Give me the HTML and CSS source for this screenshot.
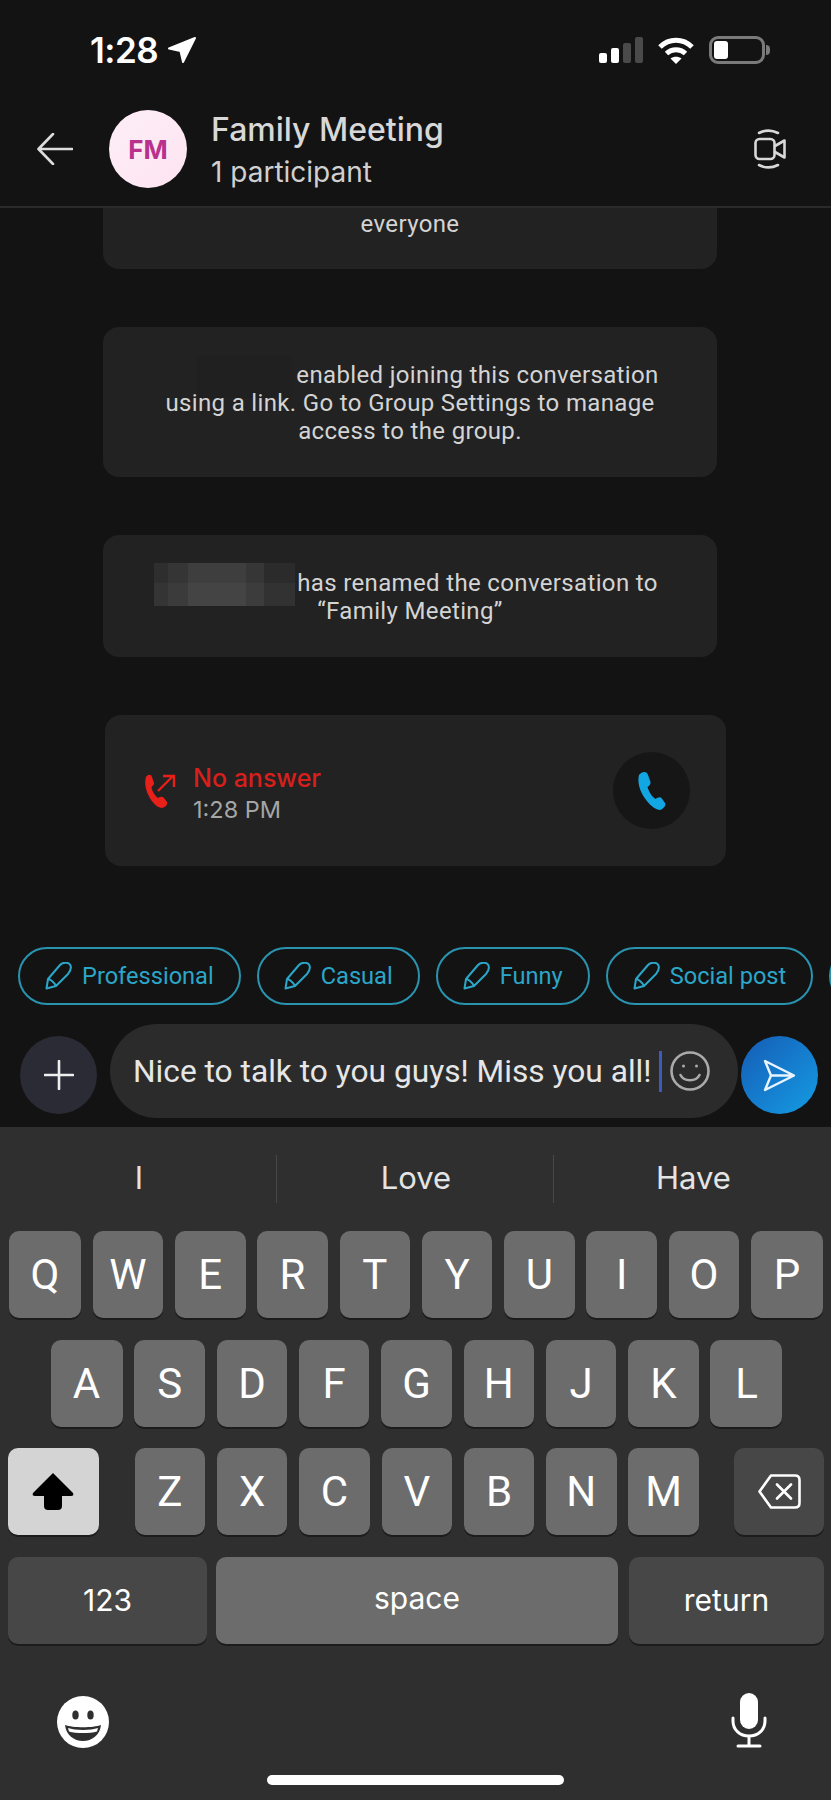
FILE: index.html
```html
<!DOCTYPE html>
<html lang="en">
<head>
    <meta charset="UTF-8">
    <meta name="viewport" content="width=device-width, initial-scale=1.0">
    <title>Family Meeting</title>
    <link rel="stylesheet" href="styles.css">
</head>
<body>
    <!-- Status bar -->
    <div class="status-bar">
        <div class="status-time">
            <span>1:28</span>
            <svg class="location-icon" width="28" height="26" viewBox="0 0 28 26"><path d="M27 1 L15 25 L12.500 14 L1 11.500 Z" fill="#fff" stroke="#fff" stroke-width="2" stroke-linejoin="round"/></svg>
        </div>
        <div class="status-icons">
            <div class="signal">
                <i class="bar-1"></i><i class="bar-2"></i><i class="bar-3"></i><i class="bar-4"></i>
            </div>
            <svg width="36" height="27" viewBox="0 0 36 27" fill="none" stroke="#fff" stroke-width="5">
                <path d="M2 10 C11 1 25 1 34 10"/>
                <path d="M8.5 16.5 C14 11.5 22 11.5 27.5 16.5"/>
                <path d="M18 27 L12.5 21.5 C15.5 19 20.5 19 23.500 21.500 Z" fill="#fff" stroke="none"/>
            </svg>
            <div class="battery"><div class="battery-fill"></div></div>
        </div>
    </div>

    <!-- Header -->
    <div class="chat-header">
        <svg class="back-icon" width="36" height="32" viewBox="0 0 36 32" fill="none" stroke="#ddd" stroke-width="2.600" stroke-linecap="round" stroke-linejoin="round"><path d="M35 16 H2 M16 1 L1.500 16 L16 31"/></svg>
        <div class="avatar">FM</div>
        <div class="chat-title">
            <div class="chat-name">Family Meeting</div>
            <div class="chat-sub">1 participant</div>
        </div>
        <svg class="video-icon" width="32" height="40" viewBox="0 0 32 40" fill="none" stroke="#d8d8d8" stroke-width="2.600" stroke-linecap="round" stroke-linejoin="round">
            <rect x="1.500" y="10" width="19" height="20" rx="4"/>
            <path d="M21 17 L30.500 11.500 V28.500 L21 23"/>
            <path d="M5 4 C11 1 18 1 24 4 M5 36 C11 39 18 39 24 36"/>
        </svg>
    </div>

    <!-- Messages -->
    <div class="messages">
        <div class="notice notice-cut">everyone</div>
        <div class="notice notice-link">
            <span class="first-line"><span class="name-faint"></span>enabled joining this conversation</span><br>
            using a link. Go to Group Settings to manage<br>
            access to the group.
        </div>
        <div class="notice notice-rename">
            <span class="first-line"><span class="name-blur"></span>has renamed the conversation to</span><br>
            “Family Meeting”
        </div>
        <div class="call-card">
            <svg class="call-missed" width="33" height="34" viewBox="0 0 33 34">
                <path d="M3 3 C5 0 8 0 9 3 L11 9 C11.500 11 9 12 8.500 13.500 C9 17 12 22 15 24 C17 23 19 22 21 24 L24 28 C25 31 22 33 19 34 C11 34 -1 16 3 3Z" fill="#e8201a"/>
                <path d="M15 17 L30 2 M20 2 H31 V13" fill="none" stroke="#e8201a" stroke-width="2.400"/>
            </svg>
            <div class="call-info">
                <div class="call-status">No answer</div>
                <div class="call-time">1:28 PM</div>
            </div>
            <div class="call-back">
                <svg width="29" height="39" viewBox="0 0 29 39"><path d="M2 4 C5 0 10 0 11 4 L13.500 11 C14 13 12 15 10.500 16 C11.500 20 15 26 18.500 28 C20.500 27 22.500 25.500 24.500 27 L28 32 C29.500 35 26 38 23 39 C15 39 -2 20 2 4Z" fill="#12a6e2"/></svg>
            </div>
        </div>
    </div>

    <!-- Tone chips -->
    <div class="chips">
        <div class="chip">
            <svg class="pen" width="27" height="28" viewBox="0 0 27 28"><path d="M1.500 26.500 L3 17 L15 3 C18 0 23 0 25 2.500 C26.500 5 25.500 9 23 12 L11 24 Z M3 17 C5 17 9 20 11 24" /></svg>
            Professional
        </div>
        <div class="chip">
            <svg class="pen" width="27" height="28" viewBox="0 0 27 28"><path d="M1.500 26.500 L3 17 L15 3 C18 0 23 0 25 2.500 C26.500 5 25.500 9 23 12 L11 24 Z M3 17 C5 17 9 20 11 24" /></svg>
            Casual
        </div>
        <div class="chip">
            <svg class="pen" width="27" height="28" viewBox="0 0 27 28"><path d="M1.500 26.500 L3 17 L15 3 C18 0 23 0 25 2.500 C26.500 5 25.500 9 23 12 L11 24 Z M3 17 C5 17 9 20 11 24" /></svg>
            Funny
        </div>
        <div class="chip">
            <svg class="pen" width="27" height="28" viewBox="0 0 27 28"><path d="M1.500 26.500 L3 17 L15 3 C18 0 23 0 25 2.500 C26.500 5 25.500 9 23 12 L11 24 Z M3 17 C5 17 9 20 11 24" /></svg>
            Social post
        </div>
        <div class="chip chip-next"></div>
    </div>

    <!-- Composer -->
    <div class="composer">
        <div class="plus-btn">
            <svg width="30" height="30" viewBox="0 0 30 30" stroke="#eee" stroke-width="2.600" stroke-linecap="round"><path d="M15 1 V29 M1 15 H29"/></svg>
        </div>
        <div class="input-box">
            <span class="input-text">Nice to talk to you guys! Miss you all!</span>
            <span class="caret"></span>
            <svg width="40" height="40" viewBox="0 0 40 40" fill="none" stroke="#aaa" stroke-width="2.600" stroke-linecap="round">
                <circle cx="20" cy="20" r="18.500"/>
                <circle cx="13.500" cy="15" r="1.500" fill="#aaa" stroke="none"/>
                <circle cx="26.500" cy="15" r="1.500" fill="#aaa" stroke="none"/>
                <path d="M10.500 24 C14 31 26 31 29.500 24"/>
            </svg>
        </div>
        <div class="send-btn">
            <svg width="33" height="33" viewBox="0 0 33 33" fill="none" stroke="#e8f4ff" stroke-width="2.400" stroke-linejoin="round"><path d="M2 2 L31 16.500 L2 31 L8 16.500 Z M8 16.500 H31"/></svg>
        </div>
    </div>

    <!-- Keyboard -->
    <div class="keyboard">
        <div class="suggestions">
            <div class="suggestion">I</div>
            <div class="suggestion">Love</div>
            <div class="suggestion">Have</div>
        </div>
        <div class="key-rows">
            <div class="key-row">
                <div class="key">Q</div><div class="key">W</div><div class="key">E</div><div class="key">R</div><div class="key">T</div><div class="key">Y</div><div class="key">U</div><div class="key">I</div><div class="key">O</div><div class="key">P</div>
            </div>
            <div class="key-row row-home">
                <div class="key">A</div><div class="key">S</div><div class="key">D</div><div class="key">F</div><div class="key">G</div><div class="key">H</div><div class="key">J</div><div class="key">K</div><div class="key">L</div>
            </div>
            <div class="key-row row-split">
                <div class="key key-shift">
                    <svg width="42" height="37" viewBox="0 0 42 37"><path d="M21 0 L41 20 C42 22 41 23 39 23 H30 V33 C30 36 28 37 26 37 H16 C14 37 12 36 12 33 V23 H3 C1 23 0 22 1 20 Z" fill="#000"/></svg>
                </div>
                <div class="letters">
                    <div class="key">Z</div><div class="key">X</div><div class="key">C</div><div class="key">V</div><div class="key">B</div><div class="key">N</div><div class="key">M</div>
                </div>
                <div class="key key-dark key-delete">
                    <svg width="43" height="35" viewBox="0 0 43 35" fill="none" stroke="#fff" stroke-width="2.600" stroke-linecap="round" stroke-linejoin="round"><path d="M13 1.500 H37 C40 1.500 41.500 3 41.500 6 V29 C41.500 32 40 33.500 37 33.500 H13 L1.500 17.500 Z M19 10.500 L33 24.500 M33 10.500 L19 24.500"/></svg>
                </div>
            </div>
            <div class="key-row row-bottom">
                <div class="key key-dark key-123">123</div>
                <div class="key key-space">space</div>
                <div class="key key-dark key-return">return</div>
            </div>
        </div>
        <div class="keyboard-tools">
            <svg width="52" height="52" viewBox="0 0 52 52">
                <circle cx="26" cy="26" r="26" fill="#fff"/>
                <ellipse cx="18.500" cy="19" rx="3.200" ry="4.500" fill="#2f2f2f"/>
                <ellipse cx="33.500" cy="19" rx="3.200" ry="4.500" fill="#2f2f2f"/>
                <path d="M8 29 C16 32 36 32 44 29 C43 39 35 45 26 45 C17 45 9 39 8 29Z" fill="#2f2f2f"/>
                <path d="M11 32 C18 34.500 34 34.500 41 32 L40 35.500 C33 37.500 19 37.500 12 35.500Z" fill="#fff"/>
            </svg>
            <svg width="36" height="55" viewBox="0 0 36 55" fill="none" stroke="#fff" stroke-width="3" stroke-linecap="round">
                <rect x="9" y="0" width="18" height="36" rx="9" fill="#fff" stroke="none"/>
                <path d="M2 25 V28 C2 37 9 43 18 43 C27 43 34 37 34 28 V25 M18 43 V53 M7 53 H29"/>
            </svg>
        </div>
        <div class="home-indicator"></div>
    </div>
</body>
</html>
```

FILE: styles.css
```css
body {
    font-family: 'Inter', 'Liberation Sans', sans-serif;
    margin: 0;
    padding: 0;
    width: 831px;
    height: 1800px;
    overflow: hidden;
    background-color: #131313;
    color: #d8d8d8;
    display: flex;
    flex-direction: column;
}

/* Status bar */
.status-bar {
    height: 100px;
    display: flex;
    align-items: center;
    justify-content: space-between;
    padding: 0 66px 0 90px;
    box-sizing: border-box;
    flex-shrink: 0;
}

.status-time {
    display: flex;
    align-items: center;
    gap: 10px;
    font-size: 35px;
    font-weight: 600;
    color: #fff;
    letter-spacing: -0.5px;
}

.status-icons {
    display: flex;
    align-items: center;
    gap: 15px;
}

.signal {
    display: flex;
    align-items: flex-end;
    gap: 4px;
    height: 26px;
}

.signal i {
    display: block;
    width: 8px;
    border-radius: 2px;
    background-color: #fff;
}

.signal .bar-1 { height: 10px; }
.signal .bar-2 { height: 15px; }
.signal .bar-3 { height: 20px; background-color: #4a4a4a; }
.signal .bar-4 { height: 26px; background-color: #4a4a4a; }

.battery {
    position: relative;
    width: 56px;
    height: 28px;
    border: 3px solid #7a7a7a;
    border-radius: 9px;
    box-sizing: border-box;
    padding: 2px;
}

.battery::after {
    content: "";
    position: absolute;
    right: -8px;
    top: 6px;
    width: 4px;
    height: 10px;
    border-radius: 0 4px 4px 0;
    background-color: #7a7a7a;
}

.battery-fill {
    width: 14px;
    height: 100%;
    border-radius: 3px;
    background-color: #fff;
}

/* Header */
.chat-header {
    height: 106px;
    display: flex;
    align-items: center;
    padding: 0 45px 8px 37px;
    box-sizing: border-box;
    flex-shrink: 0;
}

.avatar {
    width: 78px;
    height: 78px;
    margin-left: 36px;
    border-radius: 50%;
    background: linear-gradient(135deg, #fdeef6, #fde4f1);
    color: #b9318d;
    font-size: 26px;
    font-weight: 700;
    display: flex;
    align-items: center;
    justify-content: center;
}

.chat-title {
    margin-left: 24px;
    margin-top: 2px;
    flex: 1;
}

.chat-name {
    font-size: 32px;
    font-weight: 500;
    line-height: 40px;
    color: #d8d8d8;
}

.chat-sub {
    font-size: 28px;
    line-height: 38px;
    margin-top: 3px;
    color: #d0d0d0;
}

/* Messages */
.messages {
    flex: 1;
    min-height: 0;
    overflow: hidden;
    border-top: 2px solid #2a2a2a;
    display: flex;
    flex-direction: column;
    align-items: flex-start;
}

.notice {
    width: 614px;
    margin-left: 103px;
    box-sizing: border-box;
    background-color: #222;
    border-radius: 16px;
    text-align: center;
    font-family: 'Roboto', 'Liberation Sans', sans-serif;
    font-size: 24px;
    line-height: 28px;
    letter-spacing: 0.35px;
    color: #d4d4d4;
}

.notice-cut {
    margin-top: -40px;
    padding: 42px 0 31px;
    flex-shrink: 0;
}

.notice-link {
    margin-top: 58px;
    padding: 34px 0 32px;
}

.notice-rename {
    margin-top: 58px;
    padding: 34px 0 32px;
}

.first-line {
    padding-right: 8px;
}

.name-faint,
.name-blur {
    display: inline-block;
    width: 141px;
    height: 43px;
    margin: -10px 2px -10px 0;
    vertical-align: middle;
}

.name-faint {
    background: linear-gradient(90deg, #222 30%, #202020 32%, #202020 96%, #222);
}

.name-blur {
    background:
        linear-gradient(180deg, rgba(255, 255, 255, 0) 45%, rgba(255, 255, 255, 0.03) 47%, rgba(255, 255, 255, 0.03) 100%),
        linear-gradient(90deg, #2e2e2e 0 10%, #353535 10% 24%, #3e3e3e 24% 65%, #363636 65% 78%, #2b2b2b 78% 100%);
}

.call-card {
    width: 621px;
    height: 151px;
    margin: 58px 0 0 105px;
    box-sizing: border-box;
    background-color: #222;
    border-radius: 16px;
    display: flex;
    align-items: center;
    padding: 0 36px 0 38px;
    flex-shrink: 0;
}

.call-info {
    margin-left: 17px;
    padding-top: 7px;
    flex: 1;
}

.call-status {
    font-size: 25px;
    font-weight: 500;
    line-height: 32px;
    color: #d81f1c;
}

.call-time {
    font-size: 23.500px;
    line-height: 32px;
    color: #a6a6a6;
}

.call-back {
    width: 77px;
    height: 77px;
    border-radius: 50%;
    background-color: #161616;
    display: flex;
    align-items: center;
    justify-content: center;
}

/* Tone chips */
.chips {
    display: flex;
    gap: 16px;
    padding-left: 18px;
    flex-shrink: 0;
    overflow: hidden;
}

.chip {
    height: 58px;
    box-sizing: border-box;
    border: 2px solid #2a93b0;
    border-radius: 29px;
    display: flex;
    align-items: center;
    gap: 10px;
    padding: 0 25px;
    font-family: 'Roboto', 'Liberation Sans', sans-serif;
    font-size: 23.600px;
    color: #2ba6c9;
    flex-shrink: 0;
    white-space: nowrap;
}

.chip-next {
    width: 60px;
}

.pen {
    fill: none;
    stroke: #2ba6c9;
    stroke-width: 2;
    stroke-linejoin: round;
}

/* Composer */
.composer {
    display: flex;
    align-items: center;
    height: 94px;
    margin-top: 19px;
    margin-bottom: 9px;
    padding-left: 20px;
    flex-shrink: 0;
}

.plus-btn {
    width: 77px;
    height: 78px;
    margin-top: 8px;
    border-radius: 50%;
    background-color: #2b2b36;
    display: flex;
    align-items: center;
    justify-content: center;
}

.input-box {
    width: 628px;
    height: 94px;
    margin-left: 13px;
    box-sizing: border-box;
    border-radius: 47px;
    background-color: #2b2b2b;
    display: flex;
    align-items: center;
    padding-left: 23px;
}

.input-text {
    font-family: 'Roboto', 'Liberation Sans', sans-serif;
    font-size: 31.700px;
    color: #e6e6e6;
    white-space: nowrap;
}

.caret {
    width: 3px;
    height: 41px;
    margin: 0 8px;
    background-color: #3b5bc0;
    flex-shrink: 0;
}

.send-btn {
    width: 77px;
    height: 78px;
    margin-top: 8px;
    margin-left: 3px;
    border-radius: 50%;
    background: linear-gradient(135deg, #155cb5, #159ce4);
    display: flex;
    align-items: center;
    justify-content: center;
}

/* Keyboard */
.keyboard {
    height: 673px;
    background-color: #2f2f2f;
    flex-shrink: 0;
    display: flex;
    flex-direction: column;
}

.suggestions {
    height: 104px;
    display: grid;
    grid-template-columns: 277px 277px 277px;
    align-items: center;
}

.suggestion {
    height: 48px;
    line-height: 46px;
    padding-left: 2px;
    text-align: center;
    font-size: 31px;
    color: #e4e4e4;
    border-right: 1px solid #484848;
    box-sizing: border-box;
}

.suggestion:last-child {
    border-right: none;
}

.key-rows {
    display: flex;
    flex-direction: column;
    gap: 21.670px;
}

.key-row {
    display: flex;
    justify-content: center;
    gap: 11.800px;
    padding-left: 1px;
}

.key-row.row-home {
    padding-left: 2px;
}

.key-row > .key:first-child,
.key-row > .key:last-child {
    width: 72px;
}

.key-row.row-split {
    justify-content: space-between;
    gap: 0;
    padding: 0 7px 0 8px;
}

.key-row.row-bottom {
    justify-content: flex-start;
    gap: 11px;
    padding: 0 7px 0 8px;
}

.letters {
    display: flex;
    gap: 11.800px;
}

.key {
    width: 70.500px;
    height: 87px;
    border-radius: 10px;
    background-color: #6c6c6c;
    box-shadow: 0 2px 0 #1c1c1c;
    color: #fff;
    font-family: 'Roboto', 'Liberation Sans', sans-serif;
    font-size: 42px;
    display: flex;
    align-items: center;
    justify-content: center;
    flex-shrink: 0;
}

.key-dark {
    background-color: #474747;
}

.key-row > .key.key-shift {
    width: 90.500px;
    background-color: #d4d4d4;
    margin-right: 1px;
}

.key-row > .key.key-delete {
    width: 90px;
}

.key-123,
.key-space,
.key-return {
    font-family: 'Inter', 'Liberation Sans', sans-serif;
    font-size: 30px;
}

.key-row > .key.key-123 {
    width: 199px;
}

.key-space {
    width: 402px;
    margin-left: -2px;
    padding-bottom: 4px;
    box-sizing: border-box;
}

.key-row > .key.key-return {
    width: 195px;
}

.keyboard-tools {
    display: flex;
    justify-content: space-between;
    align-items: flex-end;
    padding: 0 64px 0 57px;
    margin-top: 49px;
}

.home-indicator {
    width: 297px;
    height: 10px;
    margin: 27px auto 0;
    border-radius: 5px;
    background-color: #fff;
}
```
